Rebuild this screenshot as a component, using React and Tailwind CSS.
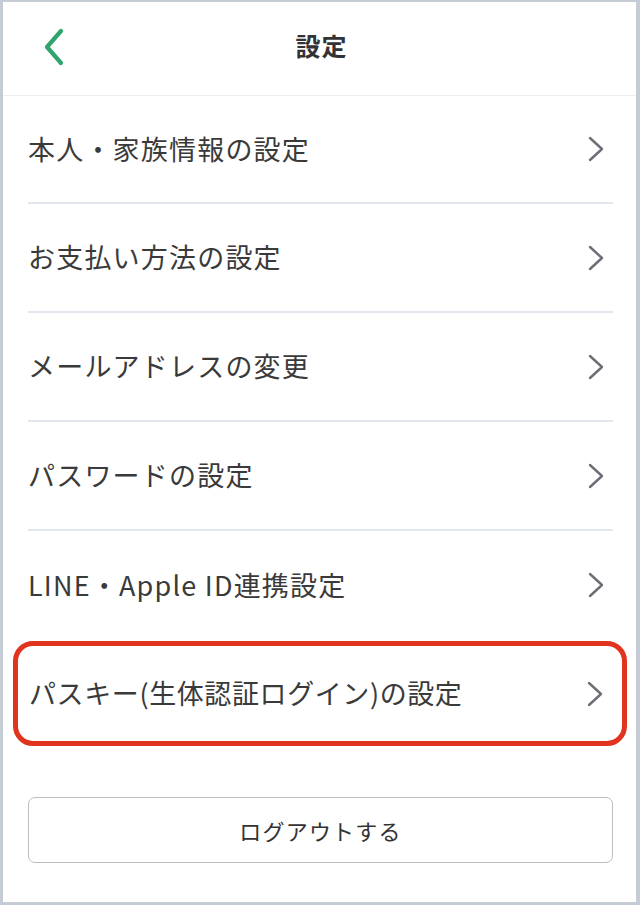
import React from 'react';

const items = [
    '本人・家族情報の設定',
    'お支払い方法の設定',
    'メールアドレスの変更',
    'パスワードの設定',
    'LINE・Apple ID連携設定',
];

function Chevron() {
    return (
        <svg width="18" height="26" viewBox="0 0 18 26" className="mr-[8px] shrink-0">
            <path d="M3 2 L15 13 L3 24" fill="none" stroke="#6b6f75" strokeWidth="2.4" strokeLinecap="round" strokeLinejoin="round" />
        </svg>
    );
}

export default function App() {
    return (
        <div
            className="w-[640px] h-[905px] bg-white border-[#c6ccd6] border-l-[3px] border-t-2 border-r-4 border-b-[3px] flex flex-col"
            style={{ fontFamily: '"Noto Sans CJK JP", "Noto Sans", sans-serif' }}
        >
            <div className="h-[94px] shrink-0 border-b border-[#eceef1] flex items-center relative">
                <svg width="24" height="38" viewBox="0 0 24 38" className="absolute left-[39px] top-[26px]">
                    <path d="M19 3 L5 19 L19 35" fill="none" stroke="#2fa46c" strokeWidth="4.2" strokeLinecap="round" strokeLinejoin="round" />
                </svg>
                <div className="flex-1 text-center text-[25px] font-bold text-[#333] tracking-[1px] pl-[4px] pb-[5px]">設定</div>
            </div>

            <div className="pl-[25px] pr-[23px] flex flex-col">
                {items.map((label, i) => (
                    <div
                        key={label}
                        className={`flex items-center justify-between text-[#3a3a3a] text-[27px] tracking-[1.2px] ${i === 0 ? 'h-[108px]' : i === items.length - 1 ? 'h-[108px]' : 'h-[109px]'} ${i < items.length - 1 ? 'border-b-2 border-[#e2e7ed]' : ''}`}
                    >
                        <span>{label}</span>
                        <Chevron />
                    </div>
                ))}

                <div className="ml-[-15px] mr-[-14px] mt-[2px] h-[105px] border-[5px] border-[#e0341e] rounded-[20px] flex items-center justify-between pl-[11px] pr-[10px] text-[#3a3a3a] text-[27px] tracking-[0.6px]">
                    <span>パスキー(生体認証ログイン)の設定</span>
                    <Chevron />
                </div>

                <div className="mt-[51px] h-[66px] border border-[#b9bdc4] rounded-[7px] flex items-center justify-center text-[22px] text-[#333] tracking-[1.2px]">
                    ログアウトする
                </div>
            </div>
        </div>
    );
}
